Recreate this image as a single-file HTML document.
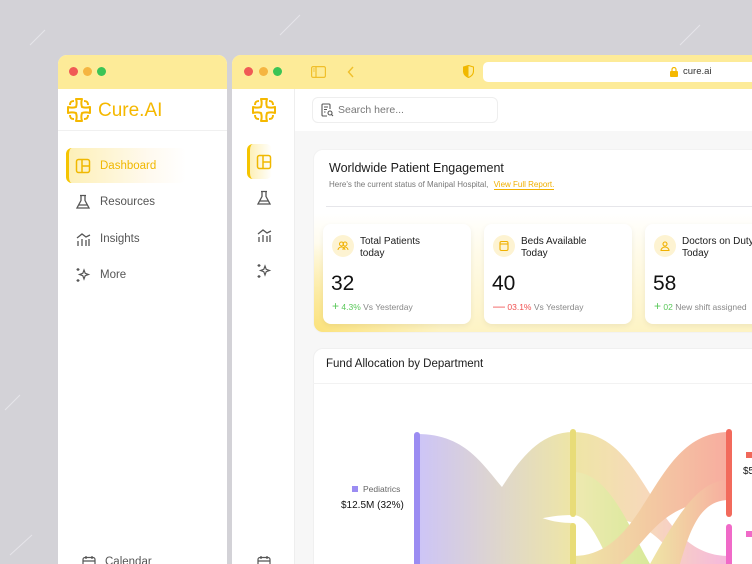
<!DOCTYPE html>
<html><head><meta charset="utf-8"><style>
*{margin:0;padding:0;box-sizing:border-box}
html,body{width:752px;height:564px;overflow:hidden}
body{background:#d3d2d7;font-family:"Liberation Sans",sans-serif;position:relative;color:#1c1c1c}
.win{position:absolute;top:55px;height:509px;background:#fff;border-radius:9px 9px 0 0;overflow:hidden}
.tb{height:34px;background:#fdeb98;position:relative}
.dot{position:absolute;top:12px;width:9px;height:9px;border-radius:50%}
.r{background:#f05a55}.y{background:#f5b541}.g{background:#3bc455}
.abs{position:absolute}
.nav{position:absolute;left:0;display:flex;align-items:center;font-size:11.5px;color:#555}
svg{display:block}
</style></head><body>
<svg class="abs" style="left:0;top:0" width="752" height="564"><g stroke="#e6e5ea" stroke-width="1"><line x1="30" y1="45" x2="45" y2="30"/><line x1="280" y1="35" x2="300" y2="15"/><line x1="680" y1="45" x2="700" y2="25"/><line x1="10" y1="555" x2="32" y2="535"/><line x1="5" y1="410" x2="20" y2="395"/></g></svg>

<div class="win" style="left:58px;width:169px">
 <div class="tb"><div class="dot r" style="left:11px"></div><div class="dot y" style="left:25px"></div><div class="dot g" style="left:39px"></div></div>
 <div style="height:42px;border-bottom:1px solid #f0f0f0;position:relative">
  <svg class="abs" style="left:8px;top:8px" width="26" height="26" viewBox="0 0 26 26" fill="none" stroke="#f5b800" stroke-width="2" stroke-linejoin="round"><path d="M10 2h6c-1 3-1 5 0 8 3 1 5 1 8 0v6c-3-1-5-1-8 0-1 3-1 5 0 8h-6c1-3 1-5 0-8-3-1-5-1-8 0v-6c3 1 5 1 8 0 1-3 1-5 0-8z"/><path d="M4 8C4 5 5 4 8 4M18 4c3 0 4 1 4 4M22 18c0 3-1 4-4 4M8 22c-3 0-4-1-4-4"/></svg>
  <div class="abs" style="left:40px;top:11px;font-size:19px;color:#f5b800">Cure.AI</div>
 </div>
 <div class="abs" style="left:8px;top:93px;width:120px;height:35px;border-radius:6px;background:linear-gradient(90deg,#fdf0b8,#fffaf0 70%,#fff);border-left:3px solid #f5c400"></div>
 <div class="nav" style="top:103px;left:17px;color:#f0b800"><svg width="16" height="16" viewBox="0 0 16 16" fill="none" stroke="#f0b800" stroke-width="1.5"><rect x="1.5" y="1.5" width="13" height="13" rx="2"/><path d="M7 1.5v13M7 8h7.5"/></svg><span style="margin-left:9px">Dashboard</span></div>
 <div class="nav" style="top:139px;left:17px"><svg width="16" height="16" viewBox="0 0 16 16" fill="none" stroke="#555" stroke-width="1.3"><path d="M5 1.5h6M6 1.5v5L2 14h12l-4-7.5v-5M3.5 11h9"/></svg><span style="margin-left:9px">Resources</span></div>
 <div class="nav" style="top:176px;left:17px"><svg width="16" height="16" viewBox="0 0 16 16" fill="none" stroke="#555" stroke-width="1.3"><path d="M2 7l5-4 4 3 4-2M3 10v5M7 8v7M11 9v6M14 8v7"/></svg><span style="margin-left:9px">Insights</span></div>
 <div class="nav" style="top:212px;left:17px"><svg width="16" height="16" viewBox="0 0 16 16" fill="none" stroke="#555" stroke-width="1.2"><path d="M9 3l1.2 3.3L13.5 7.5l-3.3 1.2L9 12l-1.2-3.3L4.5 7.5l3.3-1.2z"/><path d="M3 1v3M1.5 2.5h3M3 12v3M1.5 13.5h3"/></svg><span style="margin-left:9px">More</span></div>
 <div class="nav" style="top:500px;left:24px"><svg width="14" height="14" viewBox="0 0 14 14" fill="none" stroke="#555" stroke-width="1.2"><rect x="1" y="2.5" width="12" height="11" rx="2"/><path d="M1 6h12M4 1v3M10 1v3"/></svg><span style="margin-left:9px">Calendar</span></div>
</div>

<div class="win" style="left:232px;width:520px;border-radius:9px 0 0 0;background:#f7f7f7">
 <div class="tb"><div class="dot r" style="left:12px"></div><div class="dot y" style="left:27px"></div><div class="dot g" style="left:41px"></div>
  <svg class="abs" style="left:79px;top:11px" width="15" height="12" viewBox="0 0 15 12" fill="none" stroke="#f0bf2a" stroke-width="1.2"><rect x=".6" y=".6" width="13.8" height="10.8" rx="1.5"/><path d="M5 .6v10.8M2.3 3h1.3M2.3 5h1.3"/></svg>
  <svg class="abs" style="left:115px;top:11px" width="8" height="12" viewBox="0 0 8 12" fill="none" stroke="#f0bf2a" stroke-width="1.4"><path d="M6 1L1.5 6 6 11"/></svg>
  <svg class="abs" style="left:231px;top:10px" width="11" height="13" viewBox="0 0 11 13"><path d="M5.5 .5L10.5 2v4c0 3-2.2 5.3-5 6.5C2.7 11.3.5 9 .5 6V2z" fill="none" stroke="#f0b800" stroke-width="1.1"/><path d="M5.5 .5V12.5C2.7 11.3.5 9 .5 6V2z" fill="#f0b800"/></svg>
  <div class="abs" style="left:251px;top:7px;width:290px;height:20px;background:#fff;border-radius:5px"></div>
  <svg class="abs" style="left:438px;top:12px" width="8" height="10" viewBox="0 0 8 10"><rect x="0" y="4" width="8" height="6" rx="1" fill="#f5b800"/><path d="M2 4V2.5a2 2 0 014 0V4" fill="none" stroke="#f5b800" stroke-width="1.2"/></svg>
  <div class="abs" style="left:451px;top:11px;font-size:9.5px;color:#333">cure.ai</div>
 </div>
 <div class="abs" style="left:0;top:34px;width:63px;height:480px;background:#fff;border-right:1px solid #eee"></div>
 <div class="abs" style="left:63px;top:34px;width:457px;height:42px;background:#fff"></div>
 <svg class="abs" style="left:19px;top:42px" width="26" height="26" viewBox="0 0 26 26" fill="none" stroke="#f5b800" stroke-width="2" stroke-linejoin="round"><path d="M10 2h6c-1 3-1 5 0 8 3 1 5 1 8 0v6c-3-1-5-1-8 0-1 3-1 5 0 8h-6c1-3 1-5 0-8-3-1-5-1-8 0v-6c3 1 5 1 8 0 1-3 1-5 0-8z"/><path d="M4 8C4 5 5 4 8 4M18 4c3 0 4 1 4 4M22 18c0 3-1 4-4 4M8 22c-3 0-4-1-4-4"/></svg>
 <div class="abs" style="left:15px;top:89px;width:25px;height:35px;border-radius:6px;background:linear-gradient(90deg,#fdf0b8,#fff);border-left:3px solid #f5c400"></div>
 <svg class="abs" style="left:24px;top:99px" width="16" height="16" viewBox="0 0 16 16" fill="none" stroke="#f0b800" stroke-width="1.5"><rect x="1.5" y="1.5" width="13" height="13" rx="2"/><path d="M7 1.5v13M7 8h7.5"/></svg>
 <svg class="abs" style="left:24px;top:135px" width="16" height="16" viewBox="0 0 16 16" fill="none" stroke="#555" stroke-width="1.3"><path d="M5 1.5h6M6 1.5v5L2 14h12l-4-7.5v-5M3.5 11h9"/></svg>
 <svg class="abs" style="left:24px;top:172px" width="16" height="16" viewBox="0 0 16 16" fill="none" stroke="#555" stroke-width="1.3"><path d="M2 7l5-4 4 3 4-2M3 10v5M7 8v7M11 9v6M14 8v7"/></svg>
 <svg class="abs" style="left:24px;top:208px" width="16" height="16" viewBox="0 0 16 16" fill="none" stroke="#555" stroke-width="1.2"><path d="M9 3l1.2 3.3L13.5 7.5l-3.3 1.2L9 12l-1.2-3.3L4.5 7.5l3.3-1.2z"/><path d="M3 1v3M1.5 2.5h3M3 12v3M1.5 13.5h3"/></svg>
 <svg class="abs" style="left:25px;top:500px" width="14" height="14" viewBox="0 0 14 14" fill="none" stroke="#555" stroke-width="1.2"><rect x="1" y="2.5" width="12" height="11" rx="2"/><path d="M1 6h12M4 1v3M10 1v3"/></svg>
 <div class="abs" style="left:80px;top:42px;width:186px;height:26px;border:1px solid #eee;border-radius:6px;background:#fff"></div>
 <svg class="abs" style="left:89px;top:48px" width="13" height="14" viewBox="0 0 13 14" fill="none" stroke="#555" stroke-width="1.1"><path d="M9 6V2a1 1 0 00-1-1H2a1 1 0 00-1 1v10a1 1 0 001 1h4"/><path d="M3 4h4M3 6.5h3M3 9h1.5"/><circle cx="9" cy="10" r="2"/><path d="M10.5 11.5L12 13"/></svg>
 <div class="abs" style="left:106px;top:49px;font-size:10.5px;color:#777">Search here...</div>

 <div class="abs" style="left:81px;top:94px;width:460px;height:184px;border-radius:10px;background:linear-gradient(180deg,#fff 35%,#fffbea 55%,#fdf3c4);border:1px solid #f2f2f2;overflow:hidden">
  <div class="abs" style="left:0;bottom:0;width:130px;height:90px;background:radial-gradient(ellipse at 0 100%,#fbe27c,rgba(253,236,160,0) 70%)"></div>
 </div>
 <div class="abs" style="left:97px;top:106px;font-size:12.5px;color:#1c1c1c">Worldwide Patient Engagement</div>
 <div class="abs" style="left:97px;top:125px;font-size:8px;color:#777">Here's the current status of Manipal Hospital, <span style="color:#f0b000;border-bottom:1px solid #f0b000;margin-left:3px">View Full Report.</span></div>
 <div class="abs" style="left:94px;top:151px;width:440px;height:1px;background:#e6e6ea"></div>

 <div class="abs" style="left:91px;top:169px;width:148px;height:100px;background:#fff;border-radius:8px;box-shadow:0 2px 6px rgba(0,0,0,.06)"></div>
 <div class="abs" style="left:252px;top:169px;width:148px;height:100px;background:#fff;border-radius:8px;box-shadow:0 2px 6px rgba(0,0,0,.06)"></div>
 <div class="abs" style="left:413px;top:169px;width:148px;height:100px;background:#fff;border-radius:8px;box-shadow:0 2px 6px rgba(0,0,0,.06)"></div>
 <div class="abs" style="left:100px;top:180px;width:22px;height:22px;border-radius:50%;background:#fdf3d2"></div>
 <div class="abs" style="left:261px;top:180px;width:22px;height:22px;border-radius:50%;background:#fdf3d2"></div>
 <div class="abs" style="left:422px;top:180px;width:22px;height:22px;border-radius:50%;background:#fdf3d2"></div>
 <svg class="abs" style="left:105px;top:185px" width="12" height="12" viewBox="0 0 12 12" fill="none" stroke="#f0b000" stroke-width="1"><circle cx="4.5" cy="4" r="2"/><circle cx="8" cy="4" r="2"/><path d="M1 10c0-2 2-3 3.5-3S8 8 8 10M6 10c0-2 1-3 2-3s3 1 3 3"/></svg>
 <svg class="abs" style="left:266px;top:185px" width="12" height="12" viewBox="0 0 12 12" fill="none" stroke="#f0b000" stroke-width="1.1"><rect x="2" y="1.5" width="8" height="9" rx="1.5"/><path d="M2 4h8"/></svg>
 <svg class="abs" style="left:427px;top:185px" width="12" height="12" viewBox="0 0 12 12" fill="none" stroke="#f0b000" stroke-width="1.1"><circle cx="6" cy="4" r="2"/><path d="M2 10.5c0-2 2-3.5 4-3.5s4 1.5 4 3.5z"/></svg>
 <div class="abs" style="left:128px;top:181px;font-size:10px;line-height:12px;color:#1c1c1c">Total Patients<br>today</div>
 <div class="abs" style="left:289px;top:181px;font-size:10px;line-height:12px;color:#1c1c1c">Beds Available<br>Today</div>
 <div class="abs" style="left:450px;top:181px;font-size:10px;line-height:12px;color:#1c1c1c;white-space:nowrap">Doctors on Duty<br>Today</div>
 <div class="abs" style="left:99px;top:217px;font-size:21px;color:#111">32</div>
 <div class="abs" style="left:260px;top:217px;font-size:21px;color:#111">40</div>
 <div class="abs" style="left:421px;top:217px;font-size:21px;color:#111">58</div>
 <div class="abs" style="left:100px;top:244px;font-size:8.5px;color:#888;white-space:nowrap"><span style="color:#5ac85a;font-size:12px">+</span> <span style="color:#5ac85a">4.3%</span> Vs Yesterday</div>
 <div class="abs" style="left:261px;top:244px;font-size:8.5px;color:#888;white-space:nowrap"><span style="color:#f05050;font-size:12px">—</span> <span style="color:#f05050">03.1%</span> Vs Yesterday</div>
 <div class="abs" style="left:422px;top:244px;font-size:8.5px;color:#888;white-space:nowrap"><span style="color:#5ac85a;font-size:12px">+</span> <span style="color:#5ac85a">02</span> New shift assigned</div>

 <div class="abs" style="left:81px;top:293px;width:460px;height:240px;border-radius:10px;background:#fff;border:1px solid #f0f0f0"></div>
 <div class="abs" style="left:81px;top:328px;width:460px;height:1px;background:#f2f2f2"></div>
 <div class="abs" style="left:94px;top:303px;font-size:11.5px;color:#1c1c1c">Fund Allocation by Department</div>
 <div class="abs" style="left:120px;top:431px;width:6px;height:6px;background:#9b8cf2"></div>
 <div class="abs" style="left:131px;top:429px;font-size:8.5px;color:#666">Pediatrics</div>
 <div class="abs" style="left:109px;top:445px;font-size:10px;color:#111">$12.5M (32%)</div>
 <div class="abs" style="left:514px;top:397px;width:6px;height:6px;background:#f0685a"></div>
 <div class="abs" style="left:511px;top:411px;font-size:10px;color:#111">$5</div>
</div>

<svg class="abs" style="left:0;top:0" width="752" height="564">
<defs>
<linearGradient id="g1" x1="0" x2="1"><stop offset="0" stop-color="#b8acf5"/><stop offset="1" stop-color="#e8dc80"/></linearGradient>
<linearGradient id="g2" x1="0" x2="1"><stop offset="0" stop-color="#e8dc80"/><stop offset=".5" stop-color="#f5c8a0"/><stop offset="1" stop-color="#f29ad0"/></linearGradient>
<linearGradient id="g3" x1="0" x2="1"><stop offset="0" stop-color="#e8dc80"/><stop offset="1" stop-color="#f58a78"/></linearGradient>
<linearGradient id="g4" x1="0" x2="1"><stop offset="0" stop-color="#e8e090"/><stop offset="1" stop-color="#c8e070"/></linearGradient>
</defs>
<g opacity=".7">
<path d="M417 434C500 434 490 523 573 523L573 564L417 564z" fill="url(#g1)"/>
<path d="M417 564C490 564 500 432 573 432L573 515C500 515 490 564 417 564z" fill="url(#g1)"/>
<path d="M573 432C650 432 650 556 729 556L729 564L680 564C650 520 620 515 573 515z" fill="url(#g2)"/>
<path d="M573 472C610 472 630 530 650 564L610 564C595 530 585 515 573 515z" fill="url(#g4)"/>
<path d="M573 556C650 556 650 432 729 432L729 500C660 500 650 540 620 564L573 564z" fill="url(#g3)"/>
<path d="M650 564C680 510 700 480 729 480L729 500C700 500 690 530 680 564z" fill="url(#g3)"/>
</g>
<rect x="414" y="432" width="6" height="140" rx="3" fill="#9b8cf2"/>
<rect x="570" y="429" width="6" height="88" rx="3" fill="#e8dc78"/>
<rect x="570" y="523" width="6" height="50" rx="3" fill="#e8dc78"/>
<rect x="726" y="429" width="6" height="88" rx="3" fill="#f26a5c"/>
<rect x="726" y="524" width="6" height="50" rx="3" fill="#f06ac8"/>
<rect x="746" y="531" width="6" height="6" fill="#f06ac8"/>
</svg>
</body></html>
